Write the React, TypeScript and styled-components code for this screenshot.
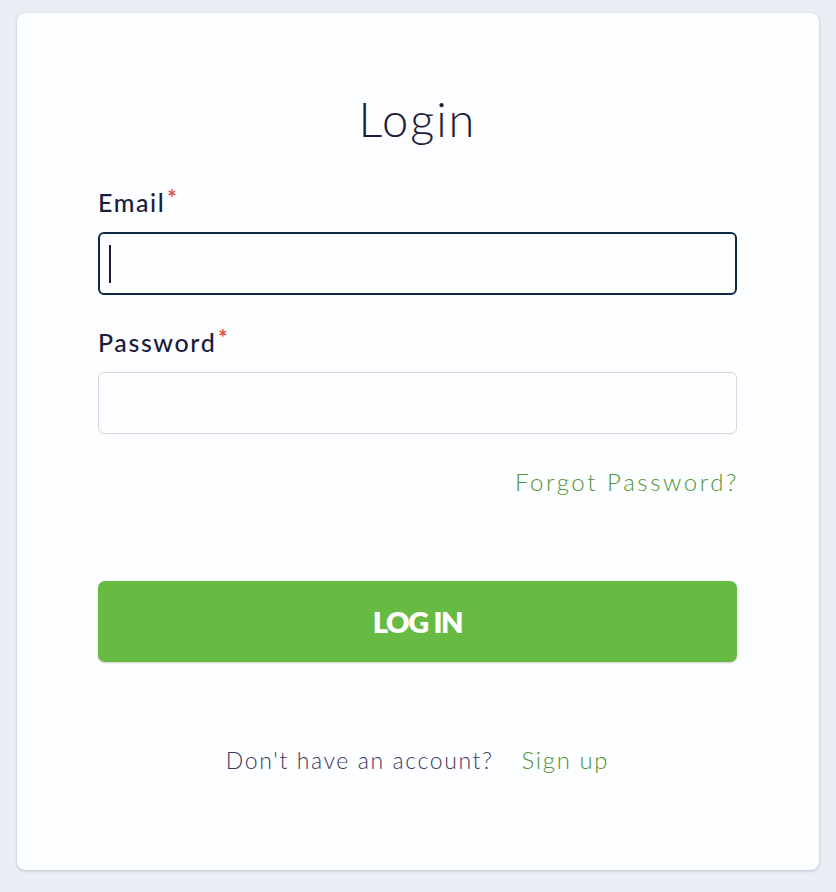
import { createGlobalStyle } from "styled-components"
import styled from "styled-components"

const GlobalStyle = createGlobalStyle`
  html, body {
    margin: 0;
    padding: 0;
    background-color: #e9eef4;
    font-family: "Lato", "Open Sans", sans-serif;
  }
  * {
    box-sizing: border-box;
  }
`

const Page = styled.div`
  padding: 13px 17px 22px 17px;
  min-height: 892px;
`

const Card = styled.div`
  background-color: #fdfeff;
  border-radius: 8px;
  box-shadow: 0 1px 3px rgba(60, 70, 90, 0.25), 0 0 1px rgba(60, 70, 90, 0.15);
  height: 857px;
  padding: 78px 82px 0 81px;
  display: flex;
  flex-direction: column;
`

const Title = styled.h1`
  margin: 0;
  font-size: 47px;
  line-height: 56px;
  font-weight: 300;
  letter-spacing: 2px;
  color: #1d1c3a;
  text-align: center;
`

const Form = styled.form`
  display: flex;
  flex-direction: column;
  margin-top: 40px;
`

const Label = styled.label<{ $gap?: number }>`
  display: block;
  font-size: 25px;
  line-height: 30px;
  font-weight: 500;
  letter-spacing: 1.6px;
  color: #1c1b3b;
  margin-top: ${(p) => p.$gap ?? 0}px;
`

const Required = styled.span`
  color: #e8493a;
  font-size: 22px;
  font-weight: 700;
  vertical-align: top;
  line-height: 22px;
  margin-left: 2px;
`

const InputWrap = styled.div`
  position: relative;
  margin-top: 15px;
`

const Input = styled.input<{ $focused?: boolean }>`
  display: block;
  width: 100%;
  height: ${(p) => (p.$focused ? 63 : 62)}px;
  padding: 0 10px;
  border-radius: 6px;
  border: ${(p) => (p.$focused ? "2px solid #10284a" : "1px solid #d3d6da")};
  background-color: #fdfeff;
  font-family: inherit;
  font-size: 24px;
  color: #1c1b3b;
  outline: none;
`

const Caret = styled.span`
  position: absolute;
  left: 11px;
  top: 13px;
  width: 2px;
  height: 38px;
  background-color: #1c1b3b;
`

const ForgotRow = styled.div`
  display: flex;
  justify-content: flex-end;
  margin-top: 33px;
  margin-right: -2px;
`

const GreenLink = styled.a<{ $spacing?: number }>`
  color: #4f9436;
  font-size: 24px;
  line-height: 30px;
  font-weight: 300;
  letter-spacing: ${(p) => p.$spacing ?? 1.5}px;
  text-decoration: none;
  cursor: pointer;
`

const SubmitButton = styled.button`
  margin-top: 84px;
  height: 81px;
  width: 100%;
  border: none;
  border-radius: 7px;
  background-color: #67bb42;
  box-shadow: 0 1px 2px rgba(40, 80, 30, 0.25);
  color: #ffffff;
  font-family: "Lato", sans-serif;
  font-weight: 800;
  font-size: 29px;
  letter-spacing: -1.3px;
  cursor: pointer;
`

const Footer = styled.div`
  display: flex;
  justify-content: center;
  gap: 28px;
  margin-top: 83px;
  font-size: 23px;
  line-height: 30px;
  font-weight: 300;
`

const FooterText = styled.span`
  color: #3b3660;
  letter-spacing: 1.6px;
`

export default function App() {
  return (
    <>
      <GlobalStyle />
      <Page>
        <Card>
          <Title>Login</Title>
          <Form onSubmit={(e) => e.preventDefault()}>
            <Label htmlFor="email">
              Email<Required>*</Required>
            </Label>
            <InputWrap>
              <Input id="email" type="email" $focused />
              <Caret />
            </InputWrap>
            <Label htmlFor="password" $gap={32}>
              Password<Required>*</Required>
            </Label>
            <InputWrap>
              <Input id="password" type="password" />
            </InputWrap>
            <ForgotRow>
              <GreenLink $spacing={2.6}>Forgot Password?</GreenLink>
            </ForgotRow>
            <SubmitButton type="submit">LOG IN</SubmitButton>
          </Form>
          <Footer>
            <FooterText>Don't have an account?</FooterText>
            <GreenLink $spacing={1.6}>Sign up</GreenLink>
          </Footer>
        </Card>
      </Page>
    </>
  )
}
